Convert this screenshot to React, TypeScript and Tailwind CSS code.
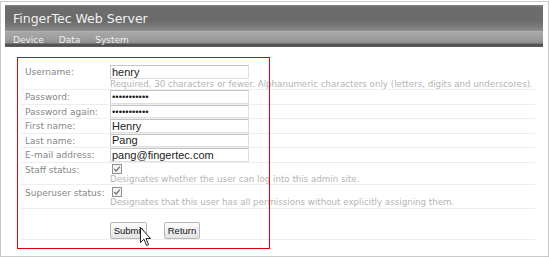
import React from "react";

function Checkbox() {
  return (
    <svg width="10" height="10" viewBox="0 0 10 10" className="block">
      <rect x="0.5" y="0.5" width="9" height="9" fill="#f4f4f4" stroke="#8f8f8f" />
      <path d="M2.2 5 L4.2 7 L7.8 2.6" fill="none" stroke="#6f6f6f" strokeWidth="1.2" />
    </svg>
  );
}

function Field({ children, h }: { children: React.ReactNode; h: string }) {
  return (
    <div
      className={`${h} w-[139px] bg-white border border-[#dedede] border-t-[#c4c4c4] border-l-[#cdcdcd] pl-[1px] flex items-center text-[11px] text-[#222] font-['Liberation_Sans',Arial,sans-serif] leading-none`}
    >
      {children}
    </div>
  );
}

const labelCls = "w-[89px] shrink-0 pl-[4px] text-[9px] text-[#878787] leading-[14px] whitespace-nowrap";
const helpCls = "text-[8.7px] text-[#b4b4b4] leading-[10px] h-[10px] whitespace-nowrap";

export default function App() {
  return (
    <div className="pt-px bg-white w-[550px] h-[257px] overflow-hidden font-['DejaVu_Sans',Verdana,sans-serif]">
      <div className="relative w-[549px] h-[256px] border border-[#c9c9c9] bg-white">
        {/* Header */}
        <div className="ml-[4px] mt-[3px] w-[538px]">
          <div className="h-[26px] pl-[8px] pt-[4px] bg-[linear-gradient(to_bottom,#8a8a8a_0px,#6c6c6c_2px,#6b6b6b_60%,#7c7c7c_85%,#8f8f8f_100%)]">
            <div className="text-[12.5px] leading-[20px] text-[#f2f2f2]">FingerTec Web Server</div>
          </div>
          <div className="h-[16px] pl-[8px] pt-[3px] bg-[linear-gradient(to_bottom,#bababa_0px,#a8a8a8_1px,#9c9c9c_8px,#8e8e8e_12px,#575757_13px,#4b4b4b_15px,#707070_16px)]">
            <div className="flex gap-[15px] text-[9px] leading-[12px] text-[#f0f0f0]">
              <span>Device</span>
              <span>Data</span>
              <span>System</span>
            </div>
          </div>
        </div>

        {/* Form */}
        <div className="ml-[20px] mt-[14px] w-[514px]">
          <div className="flex pt-[4px] border-b border-[#eeeeee]">
            <div className={labelCls}>Username:</div>
            <div>
              <Field h="h-[14px]">henry</Field>
              <div className={helpCls}>
                Required. 30 characters or fewer. Alphanumeric characters only (letters, digits and underscores).
              </div>
            </div>
          </div>
          <div className="flex h-[15px] border-b border-[#eeeeee]">
            <div className={labelCls}>Password:</div>
            <Field h="h-[14px]"><span className="text-[9.5px]">•••••••••••</span></Field>
          </div>
          <div className="flex h-[14px] border-b border-[#eeeeee]">
            <div className={labelCls}>Password again:</div>
            <Field h="h-[13px]"><span className="text-[9.5px]">•••••••••••</span></Field>
          </div>
          <div className="flex h-[15px] border-b border-[#eeeeee]">
            <div className={labelCls}>First name:</div>
            <Field h="h-[14px]">Henry</Field>
          </div>
          <div className="flex h-[14px] border-b border-[#eeeeee]">
            <div className={labelCls}>Last name:</div>
            <Field h="h-[13px]">Pang</Field>
          </div>
          <div className="flex h-[15px] border-b border-[#eeeeee]">
            <div className={labelCls}>E-mail address:</div>
            <Field h="h-[14px]">pang@fingertec.com</Field>
          </div>
          <div className="flex h-[22px] border-b border-[#eeeeee]">
            <div className={labelCls}>Staff status:</div>
            <div>
              <div className="h-[11px] pt-[1px] pl-[2px]">
                <Checkbox />
              </div>
              <div className={helpCls}>Designates whether the user can log into this admin site.</div>
            </div>
          </div>
          <div className="flex h-[24px] border-b border-[#eeeeee]">
            <div className={`${labelCls} pt-[1px]`}>Superuser status:</div>
            <div>
              <div className="h-[12px] pt-[2px] pl-[2px]">
                <Checkbox />
              </div>
              <div className={helpCls}>
                Designates that this user has all permissions without explicitly assigning them.
              </div>
            </div>
          </div>
          <div className="flex h-[31px] border-b border-[#eeeeee]">
            <div className="w-[89px] shrink-0" />
            <div className="flex gap-[17px] pt-[13px] font-['Liberation_Sans',Arial,sans-serif] text-[9.5px] text-[#111]">
              <button className="w-[37px] h-[17px] border border-[#b8b8b8] rounded-[2px] bg-[linear-gradient(to_bottom,#fdfdfd,#e4e4e4)] leading-none">
                Submit
              </button>
              <button className="w-[36px] h-[17px] border border-[#b8b8b8] rounded-[2px] bg-[linear-gradient(to_bottom,#fdfdfd,#e4e4e4)] leading-none">
                Return
              </button>
            </div>
          </div>
        </div>

        {/* Red annotation box */}
        <div className="absolute left-[16px] top-[55px] w-[253px] h-[192px] border border-[#e00000] pointer-events-none" />

        {/* Mouse cursor */}
        <svg className="absolute left-[139px] top-[225px]" width="12" height="20" viewBox="0 0 12 20">
          <path d="M0.5 0.5 L0.5 15.5 L4 12.2 L6.6 18.5 L8.6 17.6 L6 11.5 L10.5 11.5 Z" fill="#fff" stroke="#222" strokeWidth="1" strokeLinejoin="round" />
        </svg>
      </div>
    </div>
  );
}
